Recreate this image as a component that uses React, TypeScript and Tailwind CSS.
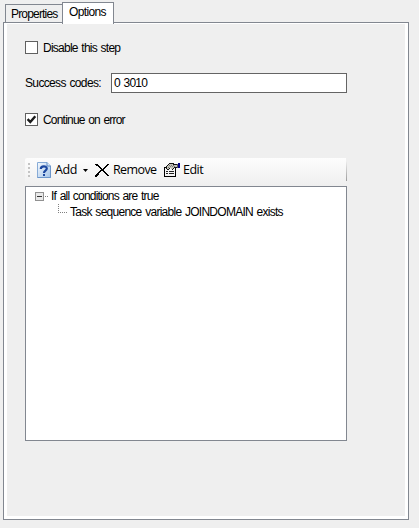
import React from 'react';

const label = "font-['Liberation_Sans',Arial,sans-serif] text-[12px] leading-[14px] whitespace-nowrap text-black [word-spacing:1px]";
const tool = "font-['Open_Sans','Noto_Sans',sans-serif] text-[12.5px] leading-[16px] whitespace-nowrap text-black";

function CheckBox({ checked = false }: { checked?: boolean }) {
  return (
    <span className="block h-[13px] w-[13px] shrink-0 border border-[#606060] bg-white">
      {checked && (
        <svg className="block" width="11" height="11" viewBox="0 0 11 11">
          <path d="M1.6 5.2 L4.3 8 L9.3 2.2" fill="none" stroke="#1c1c1c" strokeWidth="2.4" />
        </svg>
      )}
    </span>
  );
}

function HelpIcon() {
  return (
    <svg className="block shrink-0" width="14" height="16" viewBox="0 0 14 16">
      <defs>
        <linearGradient id="page" x1="0" y1="0" x2="1" y2="1">
          <stop offset="0" stopColor="#f4f9fe" />
          <stop offset="1" stopColor="#a4c4e8" />
        </linearGradient>
      </defs>
      <path d="M.5 .5H10L13.5 4V15.5H.5Z" fill="url(#page)" stroke="#87abd6" />
      <path d="M10 .5V4H13.5" fill="#dcebfa" stroke="#5c89c3" />
      <path d="M13.5 4V15.5H.5" fill="none" stroke="#6c96cb" />
      <path d="M3.8 7C3.8 3.6 9.8 3.5 9.8 6.6C9.8 8.8 7 8.6 7 11" fill="none" stroke="#1d48a0" strokeWidth="2.2" />
      <path d="M6 12H8V14H6Z" fill="#1d48a0" />
    </svg>
  );
}

function RemoveIcon() {
  return (
    <svg className="block shrink-0" width="14" height="13" viewBox="0 0 14 13" shapeRendering="crispEdges">
      <path d="M0 0H3V1H4V2H5V3H6V4H7V5H8V4H9V3H10V2H11V1H12V0H14V1H13V2H12V3H11V4H10V5H9V7H10V8H11V9H12V10H13V11H14V12H12V11H11V10H10V9H9V8H8V7H6V8H5V9H4V11H3V12H2V13H0V11H1V10H2V9H3V8H4V7H5V6H6V5H5V4H4V3H3V2H1V1H0Z" fill="#000" />
    </svg>
  );
}

function EditIcon() {
  return (
    <svg className="block shrink-0" width="16" height="14" viewBox="0 0 16 14" shapeRendering="crispEdges">
      <path d="M.5 4.5H11.5V13.5H.5Z" fill="#f5f5f5" stroke="#000" />
      <path d="M2 8H4V9H2ZM5 8H10V9H5ZM2 10H4V11H2ZM5 10H10V11H5Z" fill="#222" />
      <path d="M2.5 4.5L5.5 .5H10.5L13 1.5V4.5H10.5L8.5 6.5L6.5 5L4.5 7L2.5 6Z" fill="#c4c4b8" />
      <path d="M5 0H10V1H13V2H9V1H5ZM4 1H5V2H4ZM3 2H4V3H3ZM2 3H3V6H2ZM3 6H5V7H3ZM5 5H6V6H5ZM8 6H9V7H8ZM9 5H10V6H9ZM10 4H13V5H10Z" fill="#111" />
      <path d="M5 2H6V3H5ZM7 2H8V3H7ZM6 3H7V4H6ZM8 3H9V4H8ZM4 4H5V5H4ZM9 2H10V3H9ZM10 3H11V4H10Z" fill="#777" />
      <path d="M14 0H16V5H14Z" fill="#00008b" />
      <path d="M13 1H14V5H13Z" fill="#555" />
    </svg>
  );
}

function TreeExpander() {
  return (
    <svg className="block shrink-0" width="14" height="9" viewBox="0 0 14 9" shapeRendering="crispEdges">
      <path d="M.5 .5H8.5V8.5H.5Z" fill="#e9e9e9" stroke="#919191" />
      <path d="M2 4H7V5H2Z" fill="#333" />
      <path d="M10 4H11V5H10ZM12 4H13V5H12Z" fill="#808080" />
    </svg>
  );
}

function TreeBranch() {
  return (
    <svg className="block shrink-0" width="10" height="9" viewBox="0 0 10 9" shapeRendering="crispEdges">
      <path d="M.5 0V9" stroke="#808080" strokeDasharray="1 1" />
      <path d="M0 8.5H10" stroke="#808080" strokeDasharray="1 1" />
    </svg>
  );
}

export default function App() {
  return (
    <div className="flex h-[528px] w-[419px] flex-col overflow-hidden bg-[#efefef] pt-[2px] pl-[3px]">
      <div className="z-10 -mb-[2px] flex h-[22px] items-start pl-[2px]">
        <div className="mt-[2px] h-[18px] w-[57px] border-t border-l border-[#828790] pt-[2px] pl-[5px]">
          <div className={`${label} tracking-[-0.82px]`}>Properties</div>
        </div>
        <div className="h-[22px] w-[52px] border-x border-t border-[#828790] bg-white pt-[2px] pl-[6px]">
          <div className={`${label} tracking-[-0.65px]`}>Options</div>
        </div>
      </div>
      <main className="h-[498px] w-[406px] border border-[#828790] bg-white px-[3px] pt-px pb-[3px]">
        <div className="h-full bg-[#efefef] pt-[17px] pl-[18px]">
          <div className="flex h-[13px] items-center">
            <CheckBox />
            <span className={`${label} ml-[5px] tracking-[-0.75px]`}>Disable this step</span>
          </div>
          <div className="mt-[19px] flex h-[20px] items-center">
            <span className={`${label} w-[86px] tracking-[-0.65px]`}>Success codes:</span>
            <div className="h-[20px] w-[236px] border border-[#646464] bg-white pt-[2px] pl-[2px]">
              <div className={`${label} tracking-[-0.75px]`}>0 3010</div>
            </div>
          </div>
          <div className="mt-[20px] flex h-[13px] items-center">
            <CheckBox checked />
            <span className={`${label} ml-[5px] tracking-[-0.8px]`}>Continue on error</span>
          </div>
          <div className="mt-[32px] flex h-[28px] w-[322px]">
            <div className="flex h-[28px] w-[321px] items-center rounded-tl-[2px] bg-linear-to-b from-[#fdfdfd] to-[#efefef] pb-[4px] pl-[3px]">
              <div className="flex w-[2px] flex-col gap-[2px]">
                <i className="h-[2px] w-[2px] bg-[#c4c4c4]" />
                <i className="h-[2px] w-[2px] bg-[#c4c4c4]" />
                <i className="h-[2px] w-[2px] bg-[#c4c4c4]" />
                <i className="h-[2px] w-[2px] bg-[#c4c4c4]" />
              </div>
              <div className="ml-[7px]"><HelpIcon /></div>
              <span className={`${tool} ml-[4px] w-[28px] tracking-[-0.4px]`}>Add</span>
              <svg className="block" width="5" height="3" viewBox="0 0 5 3"><path d="M0 0H5L2.5 3Z" fill="#000" /></svg>
              <div className="ml-[7px]"><RemoveIcon /></div>
              <span className={`${tool} ml-[4px] w-[51px] tracking-[-0.6px]`}>Remove</span>
              <EditIcon />
              <span className={`${tool} ml-[3px] tracking-[-0.5px]`}>Edit</span>
            </div>
            <div className="mt-[3px] h-[20px] w-px bg-linear-to-b from-[#efefef] to-[#9c9c9c]" />
          </div>
          <div className="h-[255px] w-[322px] border border-[#828790] bg-white pt-px pl-[9px]">
            <div className="flex h-[16px] items-center">
              <TreeExpander />
              <span className={`${label} ml-[2px] tracking-[-0.79px]`}>If all conditions are true</span>
            </div>
            <div className="flex h-[16px] items-start pl-[23px]">
              <TreeBranch />
              <span className={`${label} ml-[2px] mt-px tracking-[-0.73px]`}>Task sequence variable JOINDOMAIN exists</span>
            </div>
          </div>
        </div>
      </main>
    </div>
  );
}
